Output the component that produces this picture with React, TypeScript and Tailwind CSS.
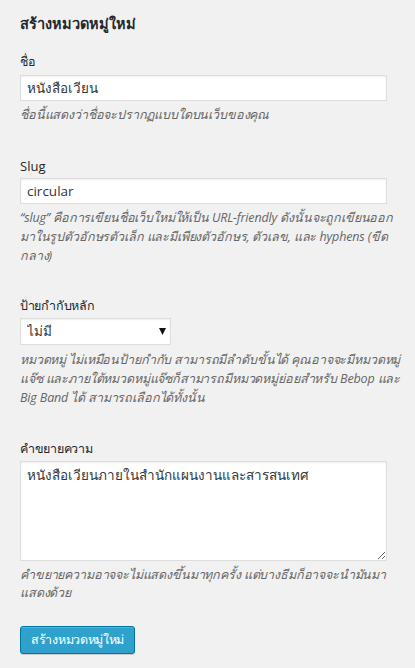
import { useState } from 'react';

const font = { fontFamily: '"Open Sans", "Noto Sans", sans-serif' };

export default function App() {
  const [name, setName] = useState('หนังสือเวียน');
  const [slug, setSlug] = useState('circular');
  const [desc, setDesc] = useState('หนังสือเวียนภายในสำนักแผนงานและสารสนเทศ');

  return (
    <div className="min-h-[668px] w-[415px] bg-[#f1f1f1] text-[#444]" style={font}>
      <form className="pl-[20px] pt-[14px]" onSubmit={(e) => e.preventDefault()}>
        <h3 className="text-[14.5px] font-bold leading-[20px] text-[#23282d]">สร้างหมวดหมู่ใหม่</h3>

        {/* name */}
        <label className="mt-[18px] block text-[12.5px] leading-[20px] tracking-[-0.3px] text-[#23282d]">ชื่อ</label>
        <input
          value={name}
          onChange={(e) => setName(e.target.value)}
          className="mt-[3px] block h-[26px] w-[367px] border border-[#ddd] bg-white px-[6px] text-[13.5px] text-[#32373c] shadow-[inset_0_1px_2px_rgba(0,0,0,0.07)] outline-none"
        />
        <p className="mt-[4px] text-[12.5px] italic leading-[20px] tracking-[-0.15px] text-[#666]">ชื่อนี้แสดงว่าชื่อจะปรากฏแบบใดบนเว็บของคุณ</p>

        {/* slug */}
        <label className="mt-[31px] block text-[13px] leading-[20px] text-[#23282d]">Slug</label>
        <input
          value={slug}
          onChange={(e) => setSlug(e.target.value)}
          className="mt-[2px] block h-[26px] w-[367px] border border-[#ddd] bg-white px-[6px] text-[13.5px] text-[#32373c] shadow-[inset_0_1px_2px_rgba(0,0,0,0.07)] outline-none"
        />
        <p className="mt-[4px] whitespace-nowrap text-[12.5px] italic leading-[19px] tracking-[-0.15px] text-[#666]">
          “slug” คือการเขียนชื่อเว็บใหม่ให้เป็น URL-friendly ดังนั้นจะถูกเขียนออก
          <br />
          มาในรูปตัวอักษรตัวเล็ก และมีเพียงตัวอักษร, ตัวเลข, และ hyphens (ขีด
          <br />
          กลาง)
        </p>

        {/* parent */}
        <label className="mt-[31px] block text-[12.5px] leading-[20px] tracking-[-0.3px] text-[#23282d]">ป้ายกำกับหลัก</label>
        <div className="relative mt-[2px] h-[27px] w-[151px]">
          <select className="block h-[27px] w-full appearance-none border border-[#ddd] bg-white px-[6px] text-[13.5px] text-[#32373c] shadow-[inset_0_1px_2px_rgba(0,0,0,0.07)] outline-none">
            <option>ไม่มี</option>
          </select>
          <svg className="pointer-events-none absolute right-[5px] top-[10px]" width="7" height="7" viewBox="0 0 7 7">
            <path d="M0 0h7L3.5 7z" fill="#111" />
          </svg>
        </div>
        <p className="mt-[5px] whitespace-nowrap text-[12.5px] italic leading-[19px] tracking-[-0.15px] text-[#666]">
          หมวดหมู่ ไม่เหมือนป้ายกำกับ สามารถมีลำดับขั้นได้ คุณอาจจะมีหมวดหมู่
          <br />
          แจ๊ซ และภายใต้หมวดหมู่แจ๊ซก็สามารถมีหมวดหมู่ย่อยสำหรับ Bebop และ
          <br />
          Big Band ได้ สามารถเลือกได้ทั้งนั้น
        </p>

        {/* description */}
        <label className="mt-[32px] block text-[12.5px] leading-[20px] tracking-[-0.3px] text-[#23282d]">คำขยายความ</label>
        <textarea
          value={desc}
          onChange={(e) => setDesc(e.target.value)}
          className="mt-[2px] block h-[100px] w-[367px] border border-[#ddd] bg-white px-[6px] py-[3px] text-[13.5px] leading-[20px] text-[#32373c] shadow-[inset_0_1px_2px_rgba(0,0,0,0.07)] outline-none"
        />
        <p className="mt-[5px] whitespace-nowrap text-[12.5px] italic leading-[18px] tracking-[-0.15px] text-[#666]">
          คำขยายความอาจจะไม่แสดงขึ้นมาทุกครั้ง แต่บางธีมก็อาจจะนำมันมา
          <br />
          แสดงด้วย
        </p>

        <button
          type="submit"
          className="mt-[24px] h-[28px] rounded-[3px] border border-[#0074a2] bg-[#2ea2cc] px-[10px] text-[12.5px] leading-[26px] tracking-[-0.3px] text-white shadow-[inset_0_1px_0_rgba(120,200,230,0.5),0_1px_0_rgba(0,0,0,0.15)]"
        >
          สร้างหมวดหมู่ใหม่
        </button>
      </form>
    </div>
  );
}
